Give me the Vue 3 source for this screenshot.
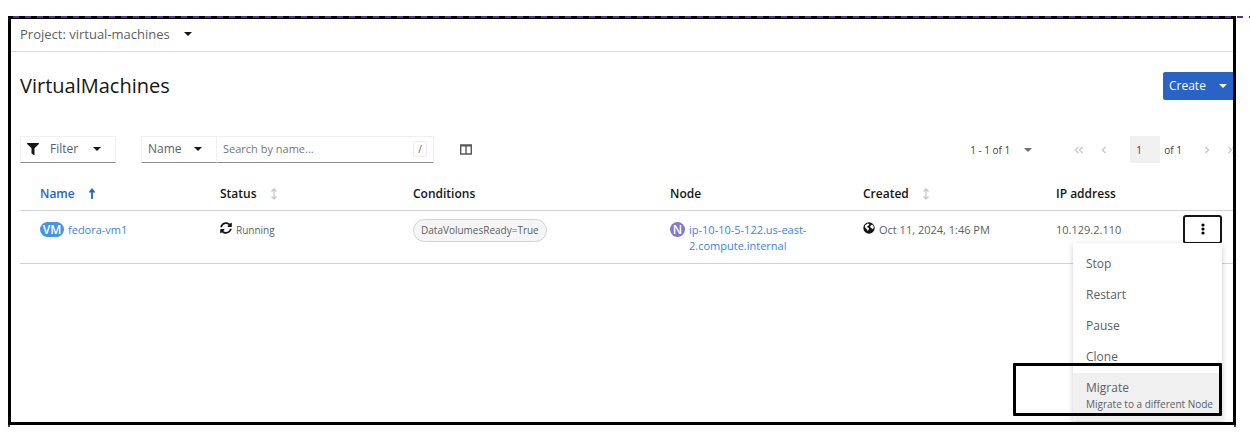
<script setup>
import { ref } from 'vue'

const project = 'virtual-machines'
const search = ref('')
const page = ref('1')
const menuOpen = ref(true)

const columns = [
  { key: 'name', label: 'Name', sort: 'asc' },
  { key: 'status', label: 'Status', sort: 'none' },
  { key: 'conditions', label: 'Conditions' },
  { key: 'node', label: 'Node' },
  { key: 'created', label: 'Created', sort: 'none' },
  { key: 'ip', label: 'IP address' },
]

const machines = [
  {
    name: 'fedora-vm1',
    status: 'Running',
    condition: 'DataVolumesReady=True',
    node: 'ip-10-10-5-122.us-east-2.compute.internal',
    created: 'Oct 11, 2024, 1:46 PM',
    ip: '10.129.2.110',
  },
]

const actions = ['Stop', 'Restart', 'Pause', 'Clone']
</script>

<template>
  <div class="page">
    <main class="frame">
      <header class="project-bar">
        <button class="plain project">
          Project: {{ project }}
          <span class="caret"></span>
        </button>
      </header>

      <div class="title-row">
        <h1>VirtualMachines</h1>
        <button class="create">Create <span class="caret"></span></button>
      </div>

      <div class="toolbar">
        <button class="control filter">
          <svg class="icon" viewBox="0 0 512 512" aria-hidden="true">
            <path d="M488 0H24C3 0-8 26 7 41l185 185v206c0 8 4 15 10 20l80 55c16 11 38 0 38-19V226L505 41c15-15 4-41-17-41z" />
          </svg>
          Filter
          <span class="caret"></span>
        </button>
        <div class="search-group">
          <button class="control by-name">Name <span class="caret"></span></button>
          <label class="control search">
            <input v-model="search" type="text" placeholder="Search by name..." aria-label="Search by name">
            <kbd>/</kbd>
          </label>
        </div>
        <button class="plain columns" aria-label="Manage columns">
          <svg viewBox="0 0 12 11" width="12" height="11" aria-hidden="true">
            <path d="M.7 1h10.600v9H.7zM6 1v9M.7 1.800h10.600" fill="none" stroke="#55585c" stroke-width="1.400" />
          </svg>
        </button>
        <nav class="pagination" aria-label="Pagination">
          <button class="plain range">1 - 1 of 1 <span class="caret"></span></button>
          <button class="plain arrow" aria-label="First page">
            <svg viewBox="0 0 10 8" width="10" height="8"><path d="M4.500 1l-3 3 3 3M8.500 1l-3 3 3 3" /></svg>
          </button>
          <button class="plain arrow" aria-label="Previous page">
            <svg viewBox="0 0 10 8" width="10" height="8"><path d="M6.500 1l-3 3 3 3" /></svg>
          </button>
          <input v-model="page" class="page-number" type="text" aria-label="Current page">
          <span class="total">of 1</span>
          <button class="plain arrow" aria-label="Next page">
            <svg viewBox="0 0 10 8" width="10" height="8"><path d="M3.500 1l3 3-3 3" /></svg>
          </button>
          <button class="plain arrow" aria-label="Last page">
            <svg viewBox="0 0 10 8" width="10" height="8"><path d="M1.500 1l3 3-3 3M5.500 1l3 3-3 3" /></svg>
          </button>
        </nav>
      </div>

      <table class="machines">
        <thead>
          <tr>
            <th v-for="col in columns" :key="col.key" :class="['col-' + col.key, { sorted: col.sort === 'asc' }]" scope="col">
              {{ col.label }}
              <svg v-if="col.sort === 'asc'" class="sort" viewBox="0 0 8 12" aria-hidden="true">
                <path d="M4 11V2M1.500 4.500L4 1.500l2.500 3" fill="none" stroke="currentColor" stroke-width="1.800" />
              </svg>
              <svg v-else-if="col.sort" class="sort muted" viewBox="0 0 8 12" aria-hidden="true">
                <path d="M4 2v8M1.500 3.500L4 1l2.500 2.500M1.500 8.500L4 11l2.500-2.500" fill="none" stroke="currentColor" stroke-width="1.300" />
              </svg>
            </th>
            <td class="col-actions"></td>
          </tr>
        </thead>
        <tbody>
          <tr v-for="vm in machines" :key="vm.name">
            <td class="col-name">
              <div class="resource">
                <span class="badge vm">VM</span>
                <a href="#">{{ vm.name }}</a>
              </div>
            </td>
            <td>
              <div class="resource small">
                <svg class="icon" viewBox="0 0 512 512" aria-hidden="true">
                  <path d="M370.700 133.300C339.500 104 298.900 88 255.800 88c-77.500.1-144.300 53.200-162.800 126.900-1.300 5.400-6.100 9.100-11.700 9.100H24.100c-7.500 0-13.200-6.800-11.800-14.200C33.900 94.900 134.800 8 256 8c66.400 0 126.800 26.100 171.300 68.700L463 41c15.100-15.100 41-4.400 41 17v134c0 13.300-10.700 24-24 24H346c-21.400 0-32.100-25.900-17-41l41.700-41.700zM32 296h134c21.400 0 32.100 25.900 17 41l-41.800 41.800c31.300 29.300 71.800 45.300 114.900 45.200 77.400-.1 144.300-53.100 162.800-126.800 1.300-5.400 6.100-9.100 11.700-9.100h57.300c7.500 0 13.200 6.800 11.800 14.200C478.100 417.100 377.200 504 256 504c-66.400 0-126.800-26.100-171.300-68.700L49 471c-15.100 15.100-41 4.400-41-17V320c0-13.300 10.700-24 24-24z" />
                </svg>
                {{ vm.status }}
              </div>
            </td>
            <td><span class="chip">{{ vm.condition }}</span></td>
            <td>
              <div class="resource">
                <span class="badge node">N</span>
                <a href="#">{{ vm.node }}</a>
              </div>
            </td>
            <td>
              <div class="resource">
                <svg class="icon globe" viewBox="0 0 12 12" aria-hidden="true">
                  <circle cx="6" cy="6" r="5.700" />
                  <path d="M2 3.500L4.500 1.500l2 .5-.8 1.600-1.500.7.3 1.200 1.500.6-.2 1.400L4.500 9 3.800 7 2 5.600zM8 3l2-.2.8 2.700-1 1.700L8.200 6 7 5z" fill="#fff" />
                </svg>
                {{ vm.created }}
              </div>
            </td>
            <td>{{ vm.ip }}</td>
            <td class="col-actions">
              <div class="actions">
                <button class="kebab" aria-label="Actions" :aria-expanded="menuOpen" @click="menuOpen = !menuOpen">
                  <svg viewBox="0 0 4 12" width="4" height="12" aria-hidden="true">
                    <circle cx="2" cy="2" r="1.600" /><circle cx="2" cy="6" r="1.600" /><circle cx="2" cy="10" r="1.600" />
                  </svg>
                </button>
                <div v-if="menuOpen" class="menu">
                  <button v-for="action in actions" :key="action" class="menu-item">{{ action }}</button>
                  <button class="menu-item active">
                    Migrate
                    <small>Migrate to a different Node</small>
                  </button>
                </div>
              </div>
            </td>
          </tr>
        </tbody>
      </table>
    </main>
  </div>
</template>

<style>
body {
  margin: 0;
  background: #fff;
}
</style>

<style scoped>
.page {
  position: relative;
  padding: 16px 14px 15px 8px;
  font: 12px/16px "Open Sans", "Noto Sans", sans-serif;
  color: #5c5f63;
}
/* page guides: dashed rule on top, short ticks below the frame */
.page::before {
  content: "";
  position: absolute;
  z-index: 3;
  top: 16px;
  left: 8px;
  right: 0;
  height: 2px;
  background: repeating-linear-gradient(90deg, transparent 0 5px, #55308d 5px 11px, transparent 11px 12px);
}
.page::after {
  content: "";
  position: absolute;
  bottom: 13px;
  left: 8px;
  right: 14px;
  height: 2px;
  border: solid #55308d;
  border-width: 0 2px;
}
.frame {
  min-height: 403px;
  border: 3px solid #000;
  overflow: hidden;
}
button,
input {
  font: inherit;
  color: inherit;
  box-sizing: border-box;
}
button {
  cursor: pointer;
}
.plain {
  padding: 0;
  border: 0;
  background: none;
}
.caret {
  width: 0;
  border: 4px solid transparent;
  border-top-color: #151515;
  border-bottom: 0;
}
.project-bar {
  height: 32px;
  padding: 0 9px;
  border-bottom: 1px solid #d9d9d9;
}
.project {
  display: flex;
  align-items: center;
  gap: 14px;
  height: 29px;
  font-size: 13px;
}
.title-row {
  display: flex;
  justify-content: space-between;
  align-items: center;
  padding: 20px 0 0 9px;
}
h1 {
  margin: 0;
  font-size: 20px;
  line-height: 28px;
  font-weight: 400;
  color: #151515;
}
.create {
  display: flex;
  align-items: center;
  justify-content: space-between;
  width: 70px;
  height: 28px;
  padding: 0 6px;
  border: 0;
  border-radius: 2px 0 0 2px;
  background: #2863c5;
  color: #fff;
}
.create .caret {
  border-top-color: #fff;
}
.toolbar {
  display: flex;
  align-items: center;
  margin-top: 36px;
  padding-left: 9px;
}
.control {
  display: flex;
  align-items: center;
  box-sizing: border-box;
  height: 27px;
  padding: 0 6px 1px;
  border: 1px solid #f0f0f0;
  border-bottom-color: #8a8d90;
  background: #fff;
}
.icon {
  width: 12px;
  height: 12px;
  flex: none;
  fill: #151515;
}
.filter {
  width: 96px;
  gap: 11px;
}
.filter .caret,
.by-name .caret {
  margin-left: auto;
  margin-right: 8px;
}
.search-group {
  display: flex;
  margin-left: 25px;
}
.by-name {
  width: 76px;
}
.search {
  width: 217px;
  border-left: 0;
}
.search input {
  flex: 1;
  min-width: 0;
  padding: 0;
  border: 0;
  outline: 0;
  font-size: 11px;
}
.search input::placeholder {
  color: #75787c;
  opacity: 1;
}
kbd {
  width: 12px;
  border: 1px solid #ececec;
  border-radius: 2px;
  font: 10px/14px "Open Sans", sans-serif;
  text-align: center;
}
.columns {
  display: flex;
  margin-left: 26px;
}
.pagination {
  display: flex;
  align-items: center;
  margin-left: auto;
  margin-right: -4px;
  font-size: 10px;
  color: #3c3f42;
}
.range {
  display: flex;
  align-items: center;
  gap: 14px;
  margin-right: 42px;
}
.range .caret {
  border-top-color: #6a6e73;
}
.arrow {
  display: flex;
  margin-right: 15px;
}
.arrow:last-child {
  margin-right: 0;
}
.arrow path {
  fill: none;
  stroke: #c6c8ca;
  stroke-width: 1.400;
}
.page-number {
  width: 30px;
  height: 27px;
  margin-left: 6px;
  padding: 0 6px;
  border: 0;
  background: #f0f0f0;
}
.total {
  margin: 0 20px 0 4px;
}
.machines {
  width: calc(100% - 9px);
  margin: 14px 0 0 9px;
  border-collapse: collapse;
  table-layout: fixed;
}
.machines tr {
  border-bottom: 1px solid #d2d2d2;
}
th,
td {
  box-sizing: border-box;
  padding: 0;
  text-align: left;
  vertical-align: top;
  white-space: nowrap;
}
th {
  height: 33px;
  padding-top: 1px;
  vertical-align: middle;
  font-weight: 600;
  color: #151515;
}
th.sorted {
  color: #2863c5;
}
.col-name {
  width: 200px;
  padding-left: 20px;
}
.col-status,
.col-node,
.col-created {
  width: 193px;
}
.col-conditions {
  width: 257px;
}
.col-actions {
  width: 50px;
}
.sort {
  width: 8px;
  height: 12px;
  margin-left: 10px;
  vertical-align: -2px;
}
.muted {
  color: #c6c8ca;
}
tbody td {
  height: 53px;
  padding-top: 11px;
  font-size: 11px;
}
.resource {
  display: flex;
  gap: 4px;
  max-width: 150px;
  white-space: normal;
}
.resource.small {
  font-size: 10px;
}
a {
  color: #3d85d9;
  text-decoration: none;
}
.badge {
  flex: none;
  height: 15px;
  border-radius: 8px;
  color: #fff;
  font-size: 12px;
  font-weight: 600;
  line-height: 15px;
  text-align: center;
}
.vm {
  width: 24px;
  background: #4394e5;
}
.node {
  width: 15px;
  background: #8476d1;
}
.chip {
  display: inline-block;
  margin-top: -4px;
  padding: 0 7px;
  border: 1px solid #d2d2d2;
  border-radius: 12px;
  background: #f5f5f5;
  font-size: 10px;
  line-height: 21px;
}
td.col-actions {
  padding-top: 4px;
}
.actions {
  position: relative;
  width: 39px;
}
.kebab {
  display: grid;
  place-items: center;
  width: 39px;
  height: 29px;
  padding: 0;
  border: 2px solid #151515;
  border-radius: 3px;
  background: #fff;
}
.menu {
  position: absolute;
  z-index: 1;
  top: 28px;
  right: 0;
  width: 149px;
  padding: 6px 0 0;
  background: #fff;
  box-shadow: 0 2px 6px rgba(0, 0, 0, 0.2);
  font-size: 12px;
}
.menu-item {
  display: block;
  width: 100%;
  height: 31px;
  padding: 0 13px;
  border: 0;
  background: none;
  text-align: left;
}
.menu-item.active {
  position: relative;
  height: 48px;
  padding-bottom: 2px;
  background: #f0f0f0;
}
/* callout around the migrate action */
.menu-item.active::after {
  content: "";
  position: absolute;
  inset: -10px 0 5px -60px;
  border: 3px solid #000;
  border-radius: 1px;
}
small {
  display: block;
  font-size: 10px;
  white-space: nowrap;
}
</style>
